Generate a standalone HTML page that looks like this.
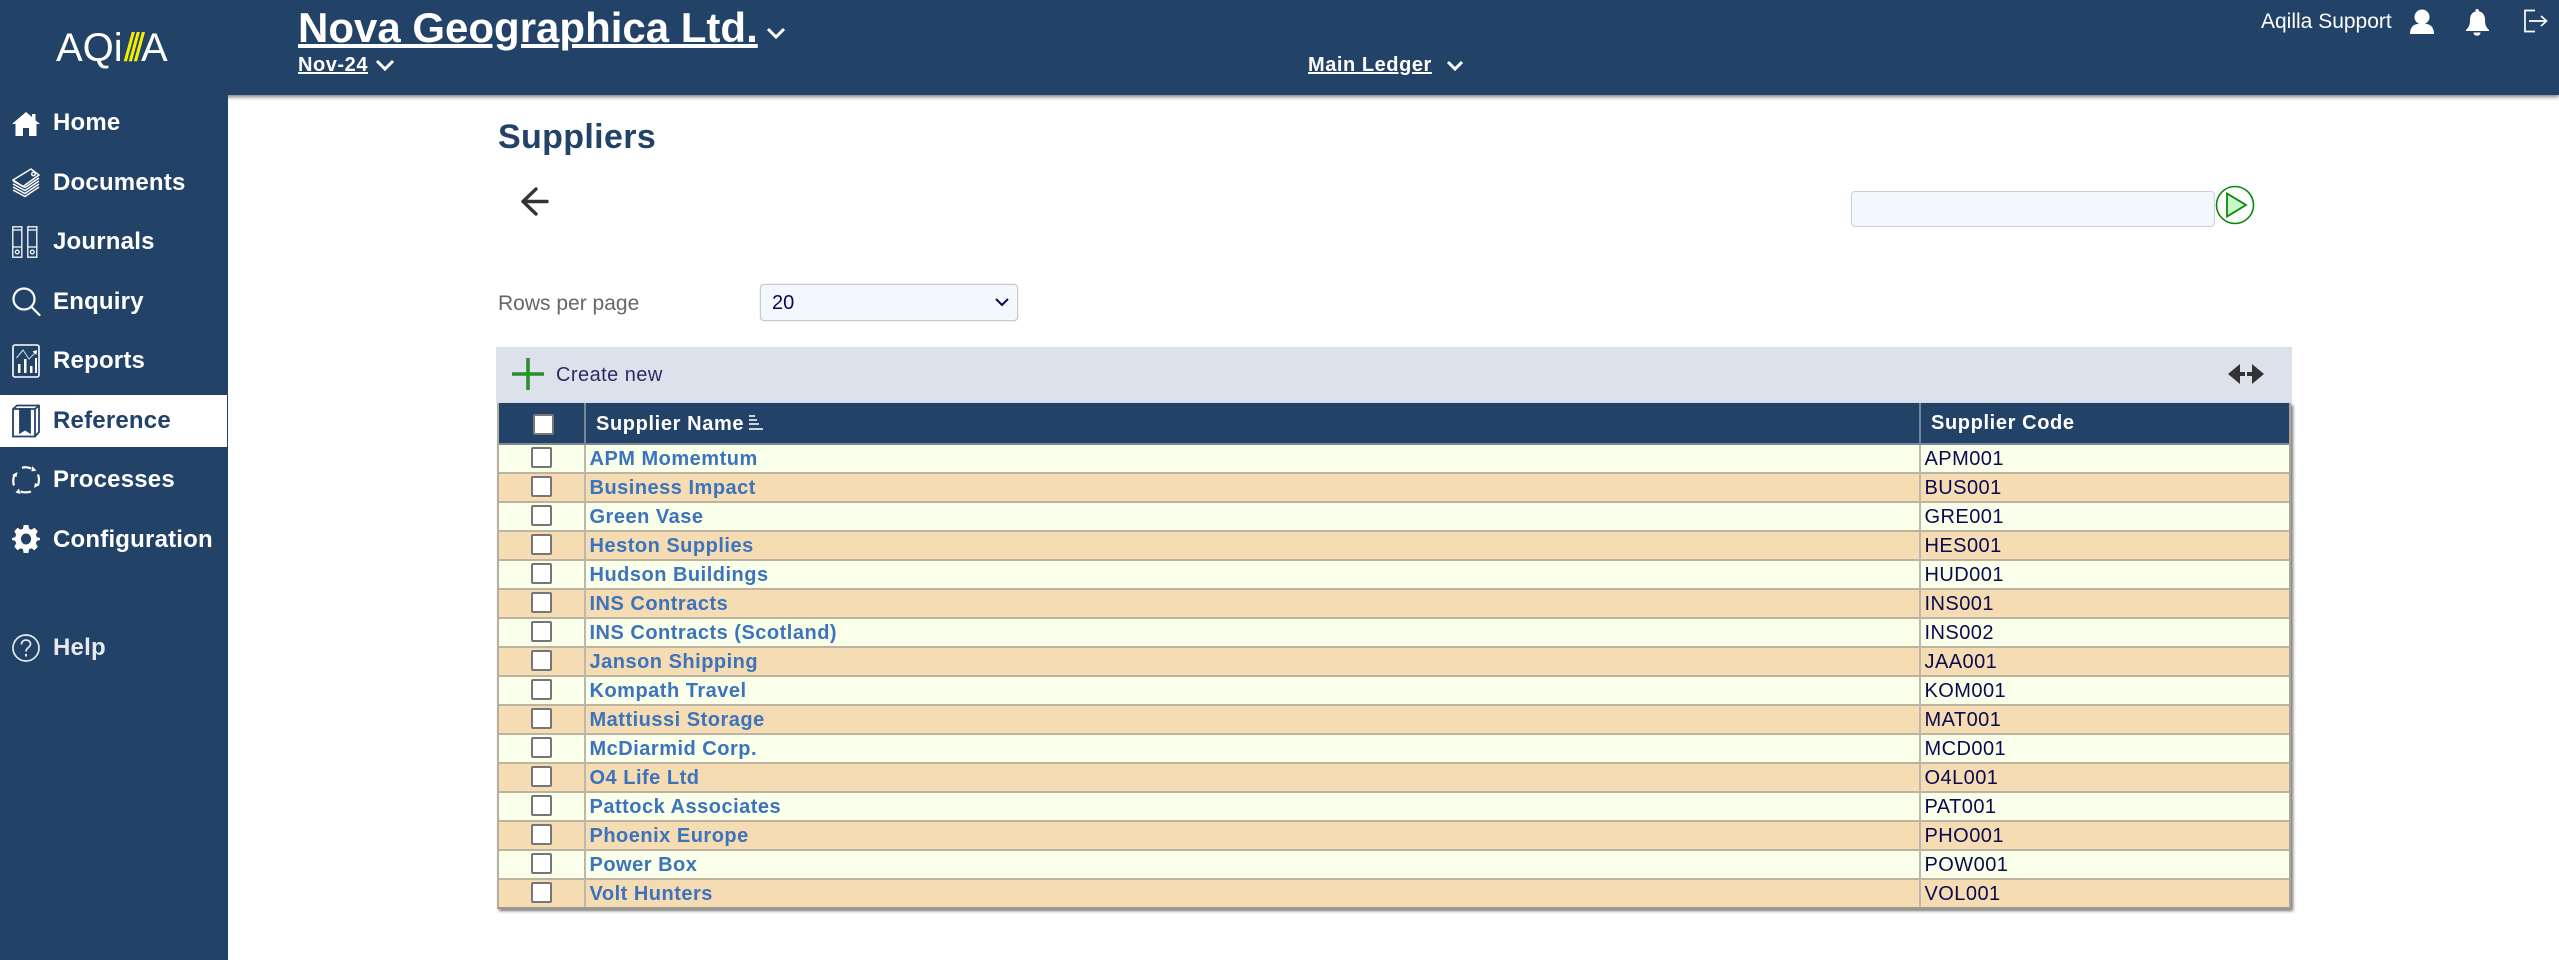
<!DOCTYPE html>
<html lang="en"><head><meta charset="utf-8"><title>Suppliers</title>
<style>
*{box-sizing:border-box}
html,body{margin:0;padding:0;width:2559px;height:960px;overflow:hidden;background:#fff;font-family:"Liberation Sans",Arial,sans-serif}
.abs,svg.i{position:absolute}
#top{position:absolute;left:0;top:0;width:2559px;height:95px;background:#234268;box-shadow:0 2px 4px rgba(0,0,0,.5)}
#side{position:absolute;left:0;top:0;width:228px;height:960px;background:#234268}
.sq{position:absolute;white-space:nowrap;color:#fff;font-weight:bold;text-decoration:underline}
.nav{position:absolute;left:53px;font-size:24px;font-weight:bold;color:#fff;line-height:30px;white-space:nowrap;letter-spacing:.2px}
#sel{position:absolute;left:0;top:395px;width:227px;height:52px;background:#fff}
table{position:absolute;left:497px;top:403px;width:1794px;border-collapse:separate;border-spacing:0;table-layout:fixed;box-shadow:2px 2px 3px #777;border-left:2px solid #b5aea3;border-right:2px solid #a9a49c;border-bottom:2px solid #a09a90}
th{height:42px;background:#234268;color:#fff;font-size:20px;text-align:left;padding:2px 0 0 10px;letter-spacing:.62px;border-right:2px solid #77879b;border-bottom:2px solid #828a94;white-space:nowrap;position:relative}
td{height:29px;padding:2px 0 0 3.5px;font-size:20px;line-height:25px;border-right:2px solid #bdb8ac;border-bottom:2px solid #bdb3a2;white-space:nowrap;color:#0a0a50;vertical-align:middle;letter-spacing:.45px}
tr:last-child td{border-bottom:0;height:27px}
tr:nth-child(odd) td{background:#faffea}
tr:nth-child(even) td{background:#f5dcb3}
td:last-child,th:last-child{border-right:0}
td a{color:#3c73bd;font-weight:bold;letter-spacing:.5px;text-decoration:none}
.cb{position:absolute;width:21px;height:21px;background:#fff;border:2px solid #767676;border-radius:2px}
td.c{position:relative;padding:0}
td.c .cb{left:32px;top:2px}
</style></head><body>
<div id="top"></div>
<div id="side"></div>

<!-- logo -->
<div class="abs" style="left:56px;top:23px;font-size:40px;line-height:50px;color:#fff;white-space:nowrap">AQi<span style="color:#f4ef00;letter-spacing:-6px;margin-left:1px">///</span><span style="margin-left:2px">A</span></div>

<!-- title -->
<div class="sq" style="left:298px;top:5px;font-size:42px;line-height:46px;text-decoration-thickness:4px">Nova Geographica Ltd.</div>
<svg class="i" style="left:766px;top:26px" width="20" height="14" viewBox="0 0 20 14"><path d="M2 3l8 8 8-8" fill="none" stroke="#fff" stroke-width="3"/></svg>
<div class="sq" style="left:298px;top:52px;font-size:20px;line-height:26px;letter-spacing:.55px">Nov-24</div>
<svg class="i" style="left:375px;top:58px" width="20" height="14" viewBox="0 0 20 14"><path d="M2 3l8 8 8-8" fill="none" stroke="#fff" stroke-width="3"/></svg>
<div class="sq" style="left:1308px;top:52px;font-size:20px;line-height:26px;letter-spacing:.55px">Main Ledger</div>
<svg class="i" style="left:1446px;top:58px" width="18" height="14" viewBox="0 0 18 14"><path d="M2 4l7 7 7-7" fill="none" stroke="#fff" stroke-width="3"/></svg>

<!-- top right -->
<div class="abs" style="left:2261px;top:9px;font-size:21px;line-height:26px;color:#fff;white-space:nowrap">Aqilla Support</div>
<svg class="i" style="left:2410px;top:9px" width="24" height="26" viewBox="0 0 24 26"><circle cx="12" cy="8" r="7.5" fill="#fff"/><path d="M0 25c0-7 4-10 8-10h8c4 0 8 3 8 10z" fill="#fff"/></svg>
<svg class="i" style="left:2465px;top:9px" width="24" height="27" viewBox="0 0 24 27"><path d="M12 0c1.300 0 2 1 2 2.300 4 1 6 4 6 8.700 0 5 1 7 4 10v1H1v-1c3-3 4-5 4-10 0-4.700 2-7.700 6-8.700C10 1 10.700 0 12 0z" fill="#fff"/><path d="M8.500 23.500h7c0 2-1.500 3.200-3.500 3.200s-3.500-1.200-3.500-3.200z" fill="#fff"/></svg>
<svg class="i" style="left:2523px;top:9px" width="25" height="25" viewBox="0 0 25 25"><path d="M12 1.500H2v21h10M6 12h17M18 7l5.500 5-5.500 5" fill="none" stroke="#fff" stroke-width="1.700"/></svg>

<!-- sidebar -->
<div id="sel"></div>
<div class="nav" style="top:108px">Home</div>
<div class="nav" style="top:168px">Documents</div>
<div class="nav" style="top:227px">Journals</div>
<div class="nav" style="top:287px">Enquiry</div>
<div class="nav" style="top:346px">Reports</div>
<div class="nav" style="top:406px;color:#234268">Reference</div>
<div class="nav" style="top:465px">Processes</div>
<div class="nav" style="top:525px">Configuration</div>
<div class="nav" style="top:633px;color:#e6e9ee">Help</div>

<svg class="i" style="left:12px;top:112px" width="28" height="24" viewBox="0 0 28 24"><path d="M14 0l6 5V2h3.500v6.200L28 12h-3.500v12H17v-8h-6v8H3.500V12H0z" fill="#fff"/></svg>
<svg class="i" style="left:12px;top:168px" width="28" height="30" viewBox="0 0 28 30" fill="none" stroke="#fff" stroke-width="1.500"><path d="M1 12L19 1l8 6-16 11.500z" fill="#234268"/><circle cx="21.500" cy="6" r="1.800"/><path d="M1 13l12 6.500L27 10M1 16l12 6.500L27 13M1 19l12 6.500L27 16M1 22l12 6.500L27 19"/></svg>
<svg class="i" style="left:12px;top:226px" width="26" height="32" viewBox="0 0 26 32" fill="none" stroke="#fff" stroke-width="1.300"><rect x=".8" y=".8" width="9" height="30.400"/><rect x="15.800" y=".8" width="9" height="30.400"/><path d="M.8 4h9M15.800 4h9M.8 21h9M15.800 21h9"/><circle cx="5.300" cy="26" r="1.900"/><circle cx="20.300" cy="26" r="1.900"/></svg>
<svg class="i" style="left:12px;top:287px" width="29" height="29" viewBox="0 0 29 29" fill="none" stroke="#fff" stroke-width="2.200"><circle cx="12" cy="12" r="10.500"/><path d="M19.500 20l8 8" stroke-linecap="round"/></svg>
<svg class="i" style="left:12px;top:344px" width="28" height="34" viewBox="0 0 28 34" fill="none"><rect x="1" y="1" width="26" height="32" rx="2" stroke="#fff" stroke-width="1.600"/><path d="M4.500 14L11 6l6 9 7-7" stroke="#d8dee6" stroke-width="1"/><path d="M25 6l-.5 5-4-3.500z" fill="#fff"/><path d="M6 20h2.500v9H6zM12 15h2.500v14H12zM18 22h2.500v7H18zM23 14h2v15h-2z" fill="#fff"/></svg>
<svg class="i" style="left:12px;top:404px" width="28" height="34" viewBox="0 0 28 34" fill="none" stroke="#234268" stroke-width="1.800"><path d="M1 5l4-3.500h22V28l-4 4.500H1z"/><path d="M1 5h22v27.500M23 5l4-3.500"/><path d="M8 5h10v23.500l-5-3-5 3z" fill="#234268"/></svg>
<svg class="i" style="left:12px;top:466px" width="28" height="28" viewBox="0 0 28 28" fill="none" stroke="#fff" stroke-width="2.200"><path d="M10 1.800c3-.9 6-.7 9 .7M2 19.500C.8 16 1 12 2.800 8.500M26 8.500c1.300 3.500 1.200 7.500-.3 11M8.500 25.500c3.300 1.200 6.800 1.200 10.500 0"/><path d="M20 0l-.5 5.500 5-1zM0 9l4.500 2 1-5zM27.500 19l-4.500-2-1 5zM7 22.500l1.500 5.500-5 -1.500z" fill="#fff" stroke="none"/></svg>
<svg class="i" style="left:12px;top:525px" width="28" height="28" viewBox="0 0 28 28"><path fill="#fff" fill-rule="evenodd" d="M11.500 0h5l.8 3.800 2.500 1 3.300-2 3.500 3.500-2 3.300 1 2.500L29 13v2l-3.400.9-1 2.500 2 3.300-3.500 3.500-3.300-2-2.500 1-.8 3.800h-5l-.8-3.800-2.500-1-3.300 2-3.500-3.500 2-3.300-1-2.500L-1 15v-2l3.400-.9 1-2.500-2-3.300L4.900 2.800l3.300 2 2.500-1zM14 8.500a5.500 5.500 0 1 0 0 11 5.500 5.500 0 0 0 0-11z" transform="translate(1 0) scale(.93 1)"/></svg>
<svg class="i" style="left:12px;top:634px" width="28" height="28" viewBox="0 0 28 28" fill="none" stroke="#e6e9ee" stroke-width="1.700"><circle cx="14" cy="14" r="13"/><path d="M9.500 10.500c0-3 2-4.500 4.500-4.500s4.500 1.600 4.500 4c0 3.500-4.500 3.500-4.500 7.500"/><path d="M14 20v2.500" stroke-width="2"/></svg>

<!-- content -->
<div class="abs" style="left:498px;top:119px;font-size:34px;line-height:36px;font-weight:bold;letter-spacing:.35px;color:#234268;white-space:nowrap">Suppliers</div>
<svg class="i" style="left:521px;top:186px" width="28" height="32" viewBox="0 0 28 32"><path d="M15 3L2 15.500l13 12.500M2 15.500h24" fill="none" stroke="#333" stroke-width="3.400" stroke-linecap="round" stroke-linejoin="round"/></svg>
<div class="abs" style="left:1851px;top:191px;width:364px;height:36px;background:#f2f8fe;border:1px solid #ccd;border-radius:4px"></div>
<svg class="i" style="left:2215px;top:185px" width="40" height="40" viewBox="0 0 40 40"><circle cx="20" cy="20" r="18.500" fill="#fff" stroke="#0a8a0a" stroke-width="1.600"/><path d="M12 8.500v23L31 20z" fill="#c8f7c8" stroke="#0a8a0a" stroke-width="1.800"/></svg>

<div class="abs" style="left:498px;top:291px;font-size:21px;line-height:25px;color:#666;white-space:nowrap">Rows per page</div>
<div class="abs" style="left:760px;top:284px;width:258px;height:37px;background:#f2f8fe;border:1px solid #c6c9cf;border-radius:4px;box-shadow:0 0 1px #bbb"></div>
<div class="abs" style="left:772px;top:291px;font-size:20px;line-height:24px;color:#0a0a50">20</div>
<svg class="i" style="left:994px;top:296px" width="16" height="14" viewBox="0 0 16 14"><path d="M2 3l6 6 6-6" fill="none" stroke="#0a0a50" stroke-width="2"/></svg>

<div class="abs" style="left:496px;top:347px;width:1796px;height:56px;background:#dce1eb"></div>
<svg class="i" style="left:512px;top:358px" width="32" height="32" viewBox="0 0 32 32"><path d="M16 1v30M1 16h30" stroke="#2a8f2a" stroke-width="3.600" stroke-linecap="round"/></svg>
<div class="abs" style="left:556px;top:362px;font-size:20px;line-height:26px;letter-spacing:.45px;color:#2b2b63;white-space:nowrap">Create new</div>
<svg class="i" style="left:2228px;top:363px" width="36" height="22" viewBox="0 0 36 22"><path d="M0 11L12 1v8h5v4h-5v8zM36 11L24 1v8h-5v4h5v8z" fill="#333"/></svg>

<table>
<colgroup><col style="width:87px"><col style="width:1335px"><col></colgroup>
<thead><tr><th style="padding:0"><span class="cb" style="left:34px;top:11px"></span></th><th>Supplier Name<svg style="position:absolute;left:163px;top:12px" width="14" height="16" viewBox="0 0 14 16"><path d="M0 1h6M0 5h8M0 9h10M0 14h14" stroke="#cfd3d9" stroke-width="2"/></svg></th><th style="padding-top:1px">Supplier Code</th></tr></thead>
<tbody>
<tr><td class="c"><span class="cb"></span></td><td><a>APM Momemtum</a></td><td>APM001</td></tr>
<tr><td class="c"><span class="cb"></span></td><td><a>Business Impact</a></td><td>BUS001</td></tr>
<tr><td class="c"><span class="cb"></span></td><td><a>Green Vase</a></td><td>GRE001</td></tr>
<tr><td class="c"><span class="cb"></span></td><td><a>Heston Supplies</a></td><td>HES001</td></tr>
<tr><td class="c"><span class="cb"></span></td><td><a>Hudson Buildings</a></td><td>HUD001</td></tr>
<tr><td class="c"><span class="cb"></span></td><td><a>INS Contracts</a></td><td>INS001</td></tr>
<tr><td class="c"><span class="cb"></span></td><td><a>INS Contracts (Scotland)</a></td><td>INS002</td></tr>
<tr><td class="c"><span class="cb"></span></td><td><a>Janson Shipping</a></td><td>JAA001</td></tr>
<tr><td class="c"><span class="cb"></span></td><td><a>Kompath Travel</a></td><td>KOM001</td></tr>
<tr><td class="c"><span class="cb"></span></td><td><a>Mattiussi Storage</a></td><td>MAT001</td></tr>
<tr><td class="c"><span class="cb"></span></td><td><a>McDiarmid Corp.</a></td><td>MCD001</td></tr>
<tr><td class="c"><span class="cb"></span></td><td><a>O4 Life Ltd</a></td><td>O4L001</td></tr>
<tr><td class="c"><span class="cb"></span></td><td><a>Pattock Associates</a></td><td>PAT001</td></tr>
<tr><td class="c"><span class="cb"></span></td><td><a>Phoenix Europe</a></td><td>PHO001</td></tr>
<tr><td class="c"><span class="cb"></span></td><td><a>Power Box</a></td><td>POW001</td></tr>
<tr><td class="c"><span class="cb"></span></td><td><a>Volt Hunters</a></td><td>VOL001</td></tr>
</tbody></table>
</body></html>
